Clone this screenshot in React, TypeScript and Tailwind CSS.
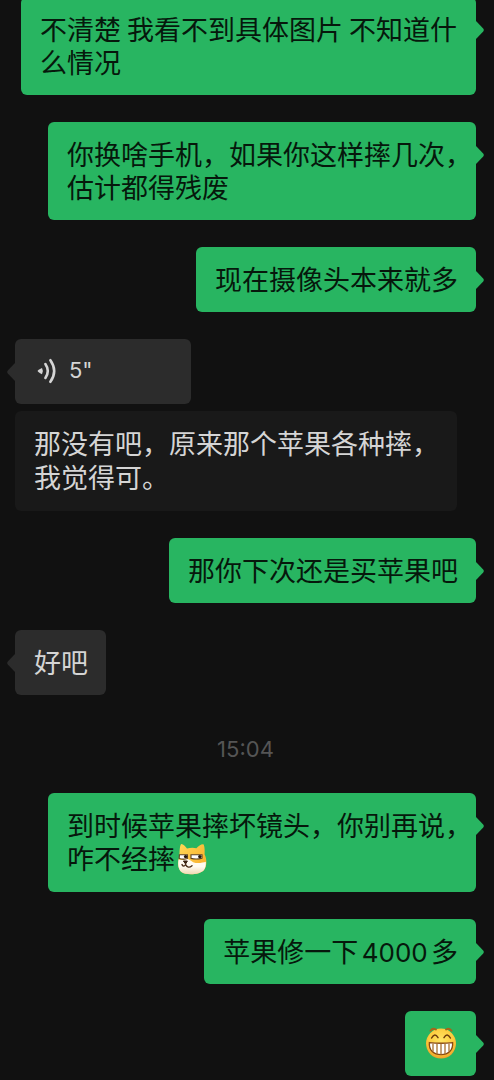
import type { ReactNode } from 'react';

type Variant = 'sent' | 'received' | 'transcript';

const VARIANTS: Record<Variant, string> = {
  sent: 'self-end rounded-md bg-[#28b561] text-[#06180c] leading-[33px]',
  received: 'self-start rounded-md bg-[#2c2c2c] text-[#d5d5d5] leading-[33px]',
  transcript: 'self-start rounded-md bg-[#191919] text-[#d5d5d5] leading-[34px]',
};

const Tail = ({ side }: { side: 'left' | 'right' }) => (
  <svg
    viewBox="0 0 9 18"
    aria-hidden="true"
    className={
      side === 'right'
        ? 'absolute left-full top-6 -ml-px h-[18px] w-[9px] text-[#28b561]'
        : 'absolute right-full top-6 -mr-px h-[18px] w-[9px] -scale-x-100 text-[#2c2c2c]'
    }
  >
    <path d="M0 0 L1 0 L8.2 7.4 Q9.4 9 8.2 10.6 L1 18 L0 18 Z" fill="currentColor" />
  </svg>
);

const Bubble = ({
  variant = 'sent',
  className = 'max-w-[455px]',
  children,
}: {
  variant?: Variant;
  className?: string;
  children: ReactNode;
}) => (
  <div className={`relative pt-[15px] pb-[17px] pl-[19px] pr-[18px] ${VARIANTS[variant]} ${className}`}>
    {children}
    {variant === 'sent' && <Tail side="right" />}
    {variant === 'received' && <Tail side="left" />}
  </div>
);

const VoiceIcon = () => (
  <svg viewBox="0 0 20 26" fill="none" stroke="currentColor" aria-hidden="true" className="h-[26px] w-5">
    <path d="M5 10 Q0.6 12 0.6 13 Q0.6 14 5 16.2 Q6.8 13 5 10 Z" fill="currentColor" stroke="none" />
    <path d="M8.4 6 Q13.2 13 8.4 20" strokeWidth="2.6" strokeLinecap="round" />
    <path d="M13.4 2.2 Q21 13 13.4 23.8" strokeWidth="2.6" strokeLinecap="round" />
  </svg>
);

const DogeEmoji = () => (
  <svg viewBox="0 0 34 34" role="img" aria-label="旺柴" className="-mt-[7px] -mb-px inline-block h-[34px] w-[34px] align-middle">
    <defs>
      <linearGradient id="doge-fur" x1="0" y1="0" x2="1" y2="0.8">
        <stop offset="0" stopColor="#ffd957" />
        <stop offset="1" stopColor="#f9ac28" />
      </linearGradient>
      <linearGradient id="doge-muzzle" x1="0" y1="0" x2="0" y2="1">
        <stop offset="0.5" stopColor="#fffaf0" />
        <stop offset="1" stopColor="#f0d9b4" />
      </linearGradient>
    </defs>
    <path
      d="M6.4 2 C8.4 2.2 10.4 4.6 12 6.4 Q17.4 5 21.4 6.2 C23.4 4 26.4 1.8 28.4 2.2 C29.8 4 29.8 9.4 29.6 12.4 C32 17 32.2 24 29 28 C25.4 33 10.4 33.4 6.4 30 C2.4 26.6 2.6 19.6 4.4 14 C4.6 9.6 4.6 3 6.4 2 Z"
      fill="url(#doge-fur)"
    />
    <path
      d="M3.6 17.4 Q7 18.8 11.6 16.8 C15 17.4 17 20.4 20.6 21 C25 21.4 28.8 20.4 30.8 19.8 C31 23.4 30.6 26 29 28 C25.4 33 10.4 33.4 6.4 30 C3.2 27.2 2.8 22 3.6 17.4 Z"
      fill="url(#doge-muzzle)"
    />
    <path d="M4.4 12.8 H12.4 V16.4 Q8.4 17.8 4.2 16.4 Z" fill="#fff" stroke="#5d4120" strokeWidth="1.1" />
    <path d="M16 12.8 H27 V16.2 Q21.4 17.8 16 16.4 Z" fill="#fff" stroke="#5d4120" strokeWidth="1.1" />
    <circle cx="10.6" cy="14.6" r="1.7" fill="#24170b" />
    <circle cx="24.8" cy="14.6" r="1.7" fill="#24170b" />
    <path d="M8.4 19 H12.4 L10.6 22 Z" fill="#3b2413" stroke="#3b2413" strokeLinejoin="round" />
    <path d="M7 22.6 Q8.6 25.6 10.6 22.6 Q13 27 17 23.8" fill="none" stroke="#4a2d17" strokeWidth="1.4" strokeLinecap="round" />
  </svg>
);

const GrinEmoji = () => (
  <svg viewBox="0 0 34 34" role="img" aria-label="呲牙" className="-mt-[7px] -mb-px inline-block h-[34px] w-[34px] align-middle">
    <defs>
      <radialGradient id="grin-face" cx="0.5" cy="0.4" r="0.6">
        <stop offset="0" stopColor="#ffe566" />
        <stop offset="0.7" stopColor="#fdcb3c" />
        <stop offset="1" stopColor="#eda02a" />
      </radialGradient>
    </defs>
    <circle cx="17" cy="17.6" r="15" fill="url(#grin-face)" />
    <path d="M6.4 4.8 Q8.8 1.4 12 3.6 M22 3.6 Q25.4 1.4 27.6 4.8" fill="none" stroke="#a8641a" strokeWidth="1.8" strokeLinecap="round" />
    <path d="M7.6 12 Q10.8 6.2 14 11.6 M20 11.6 Q23.2 6.2 26.4 12" fill="none" stroke="#6d3c0c" strokeWidth="1.5" strokeLinecap="round" />
    <path d="M5.4 16.6 Q17 18 28.6 16.6 C29.4 24.4 24 28.6 17 28.6 C10 28.6 4.6 24.4 5.4 16.6 Z" fill="#fff" stroke="#8a4b12" strokeWidth="1.4" />
    <path d="M9 17.4 V25.4 M13 17.6 V28 M17 17.6 V28.4 M21 17.6 V28 M25 17.4 V25.4" stroke="#a8702f" strokeWidth="1.3" />
  </svg>
);

export default function App() {
  return (
    <main className="min-h-screen overflow-hidden bg-[#111111] font-['Noto_Sans_CJK_SC',sans-serif] text-[27px]">
      {/* The oldest message is partly scrolled past the top edge */}
      <div className="-mt-[3px] flex flex-col gap-[27px] pl-[15px] pr-[18px]">
        <Bubble>不清楚 我看不到具体图片 不知道什么情况</Bubble>
        {/* A closing comma hangs into the bubble's padding, so these two break by hand */}
        <Bubble className="w-[428px] whitespace-nowrap">
          你换啥手机，如果你这样摔几次，
          <br />
          估计都得残废
        </Bubble>
        <Bubble>现在摄像头本来就多</Bubble>

        <div className="flex flex-col gap-[7px]">
          <Bubble variant="received" className="w-44">
            <button type="button" aria-label={'5"'} className="flex items-center gap-3 pl-[3px] font-['Inter',sans-serif] text-[22px]">
              <VoiceIcon />
              5"
            </button>
          </Bubble>
          <Bubble variant="transcript" className="max-w-[442px]">
            那没有吧，原来那个苹果各种摔，我觉得可。
          </Bubble>
        </div>

        <Bubble>那你下次还是买苹果吧</Bubble>
        <Bubble variant="received">好吧</Bubble>

        <time className="self-center pt-[10px] font-['Inter',sans-serif] text-[22px] leading-[34px] text-[#555555]">
          15:04
        </time>

        <Bubble className="w-[428px] whitespace-nowrap">
          到时候苹果摔坏镜头，你别再说，
          <br />
          咋不经摔
          <DogeEmoji />
        </Bubble>
        <Bubble className="[text-autospace:normal]">
          苹果修一下<span className="font-['Inter',sans-serif] text-[26px] leading-none">4000</span>多
        </Bubble>
        <Bubble>
          <GrinEmoji />
        </Bubble>
      </div>
    </main>
  );
}
